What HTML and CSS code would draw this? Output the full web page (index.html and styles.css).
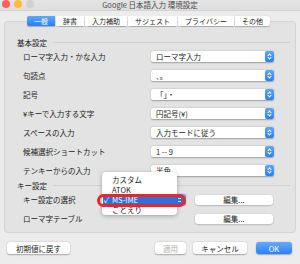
FILE: index.html
```html
<!DOCTYPE html>
<html lang="ja">
<head>
    <meta charset="UTF-8">
    <meta name="viewport" content="width=device-width, initial-scale=1.0">
    <title>Google 日本語入力 環境設定</title>
    <link rel="stylesheet" href="styles.css">
</head>
<body>
    <div class="window">
        <div class="titlebar">
            <div class="lights">
                <span class="light red"></span>
                <span class="light yellow"></span>
                <span class="light gray"></span>
            </div>
            <div class="title">Google 日本語入力 環境設定</div>
            <div></div>
        </div>

        <div class="tabs">
            <div class="tab active">一般</div>
            <div class="tab">辞書</div>
            <div class="tab">入力補助</div>
            <div class="tab">サジェスト</div>
            <div class="tab">プライバシー</div>
            <div class="tab">その他</div>
        </div>

        <div class="group">
            <div class="section">基本設定</div>

            <div class="row">
                <span class="label">ローマ字入力・かな入力</span>
                <div class="select"><span>ローマ字入力</span><i class="arrows"></i></div>
            </div>
            <div class="row">
                <span class="label">句読点</span>
                <div class="select"><span>、。</span><i class="arrows"></i></div>
            </div>
            <div class="row">
                <span class="label">記号</span>
                <div class="select"><span>「」・</span><i class="arrows"></i></div>
            </div>
            <div class="row">
                <span class="label">¥キーで入力する文字</span>
                <div class="select"><span>円記号(¥)</span><i class="arrows"></i></div>
            </div>
            <div class="row">
                <span class="label">スペースの入力</span>
                <div class="select"><span>入力モードに従う</span><i class="arrows"></i></div>
            </div>
            <div class="row">
                <span class="label">候補選択ショートカット</span>
                <div class="select"><span>1 -- 9</span><i class="arrows"></i></div>
            </div>
            <div class="row">
                <span class="label">テンキーからの入力</span>
                <div class="select"><span>半角</span><i class="arrows"></i></div>
            </div>

            <div class="section">キー設定</div>

            <div class="row">
                <span class="label">キー設定の選択</span>
                <div class="controls">
                    <div class="select short"><span></span><i class="arrows"></i></div>
                    <button class="btn edit">編集...</button>
                </div>
            </div>
            <div class="row">
                <span class="label">ローマ字テーブル</span>
                <div class="controls">
                    <div class="spacer"></div>
                    <button class="btn edit">編集...</button>
                </div>
            </div>
        </div>

        <div class="footer">
            <button class="btn reset">初期値に戻す</button>
            <div class="grow"></div>
            <button class="btn apply" disabled>適用</button>
            <button class="btn cancel">キャンセル</button>
            <button class="btn ok">OK</button>
        </div>

        <!-- open popup menu over キー設定の選択 -->
        <div class="menu">
            <div class="item">カスタム</div>
            <div class="item">ATOK</div>
            <div class="item selected"><span class="check">✓</span>MS-IME<i class="mini-arrows"></i></div>
            <div class="item">ことえり</div>
        </div>
        <div class="mark"></div>
    </div>
</body>
</html>
```

FILE: styles.css
```css
:root {
    --window-bg: #ececec;
    --group-bg: #e3e3e3;
    --group-border: #d3d3d3;
    --blue: #3a8cf6;
    --text: #222;
}

* {
    box-sizing: border-box;
    margin: 0;
    padding: 0;
}

body {
    font-family: "Noto Sans CJK JP", "Liberation Sans", sans-serif;
    font-size: 7.5px;
    color: var(--text);
    background-color: var(--window-bg);
}

.window {
    position: relative;
    width: 300px;
    height: 264px;
    overflow: hidden;
    background-color: var(--window-bg);
}

.titlebar {
    display: grid;
    grid-template-columns: 1fr auto 1fr;
    align-items: center;
    height: 11px;
    background: linear-gradient(#e4e4e4, #dedede);
    border-bottom: 1px solid #d2d2d2;
}

.lights {
    display: flex;
    gap: 4px;
    padding-left: 2px;
    margin-top: -3px;
}

.light {
    width: 8px;
    height: 8px;
    border-radius: 50%;
}

.red { background-color: #fc605c; }
.yellow { background-color: #fdbc40; }
.gray { background-color: #d0d0d0; }

.title {
    font-size: 7.5px;
    line-height: 10px;
    color: #4a4a4a;
}

.tabs {
    position: relative;
    z-index: 1;
    display: flex;
    justify-content: center;
    gap: 1px;
    margin-top: 5px;
    margin-bottom: -5px;
    padding-right: 3px;
}

.tab {
    height: 10px;
    line-height: 10px;
    padding: 0 7px;
    font-size: 7px;
    background-color: white;
    box-shadow: 0 0.5px 1px rgba(0,0,0,0.25);
}

.tab:first-child {
    border-radius: 2px 0 0 2px;
}

.tab:last-child {
    border-radius: 0 2px 2px 0;
}

.tab.active {
    background: linear-gradient(#5ea8fb, #2b7ff3);
    color: white;
}

.group {
    margin: 0 4px;
    height: 212px;
    background-color: var(--group-bg);
    border: 1px solid var(--group-border);
    border-radius: 4px;
    padding-top: 15px;
}

.section {
    display: flex;
    align-items: center;
    gap: 6px;
    height: 10px;
    padding-left: 12px;
    padding-right: 5px;
}

.section::after {
    content: "";
    flex: 1;
    height: 1px;
    background-color: #d2d2d2;
}

.row {
    display: grid;
    grid-template-columns: 146px 123px;
    align-items: center;
    height: 19px;
}

.label {
    padding-left: 18px;
}

.select {
    display: flex;
    align-items: center;
    justify-content: space-between;
    height: 11px;
    background-color: white;
    border-radius: 2px;
    box-shadow: 0 0.5px 1.5px rgba(0,0,0,0.3);
    padding-left: 5px;
}

.select span {
    white-space: nowrap;
}

.arrows {
    position: relative;
    width: 9px;
    height: 11px;
    border-radius: 2px;
    background: linear-gradient(#5ea8fb, #2b7ff3);
}

.arrows::before,
.arrows::after {
    content: "";
    position: absolute;
    left: 3px;
    width: 2px;
    height: 2px;
    border: solid white;
    border-width: 1px 0 0 1px;
}

.arrows::before {
    top: 3px;
    transform: rotate(45deg);
}

.arrows::after {
    bottom: 3px;
    transform: rotate(225deg);
}

.controls {
    display: flex;
    align-items: center;
    gap: 9px;
}

.select.short {
    width: 35px;
}

.spacer {
    width: 35px;
}

.btn {
    font-family: inherit;
    font-size: 7.5px;
    height: 11px;
    border: none;
    border-radius: 3px;
    background-color: white;
    color: var(--text);
    box-shadow: 0 0.5px 1.5px rgba(0,0,0,0.3);
}

.edit {
    width: 78px;
    height: 10px;
    line-height: 10px;
}

.footer {
    display: flex;
    align-items: center;
    gap: 7px;
    margin-top: 9px;
    padding: 0 8px 0 7px;
}

.grow {
    flex: 1;
}

.reset {
    width: 63px;
    height: 12px;
}

.apply {
    width: 31px;
    height: 12px;
    color: #b0b0b0;
}

.cancel {
    width: 54px;
    height: 12px;
}

.ok {
    width: 36px;
    height: 12px;
    margin-left: 2px;
    color: white;
    background: linear-gradient(#63aafb, #2c80f4);
}

.menu {
    position: absolute;
    left: 102px;
    top: 172px;
    width: 75px;
    height: 43px;
    padding-top: 3px;
    background-color: white;
    border-radius: 4px;
    box-shadow: 0 1px 4px rgba(0,0,0,0.3);
}

.item {
    position: relative;
    height: 10px;
    line-height: 10px;
    padding-left: 10px;
    font-size: 7.5px;
}

.item.selected {
    margin-left: 1px;
    margin-right: -6px;
    padding-left: 9px;
    color: white;
    background-color: #2f6fdc;
}

.check {
    position: absolute;
    left: 1px;
    top: 0;
}

.mini-arrows {
    position: absolute;
    right: 2px;
    top: 3px;
    width: 3px;
    height: 4px;
    border-top: 1px solid #cfe0fb;
    border-bottom: 1px solid #cfe0fb;
}

.mark {
    position: absolute;
    left: 97px;
    top: 194px;
    width: 89px;
    height: 13px;
    border: 3px solid #ee2528;
    border-radius: 7px;
}
```
